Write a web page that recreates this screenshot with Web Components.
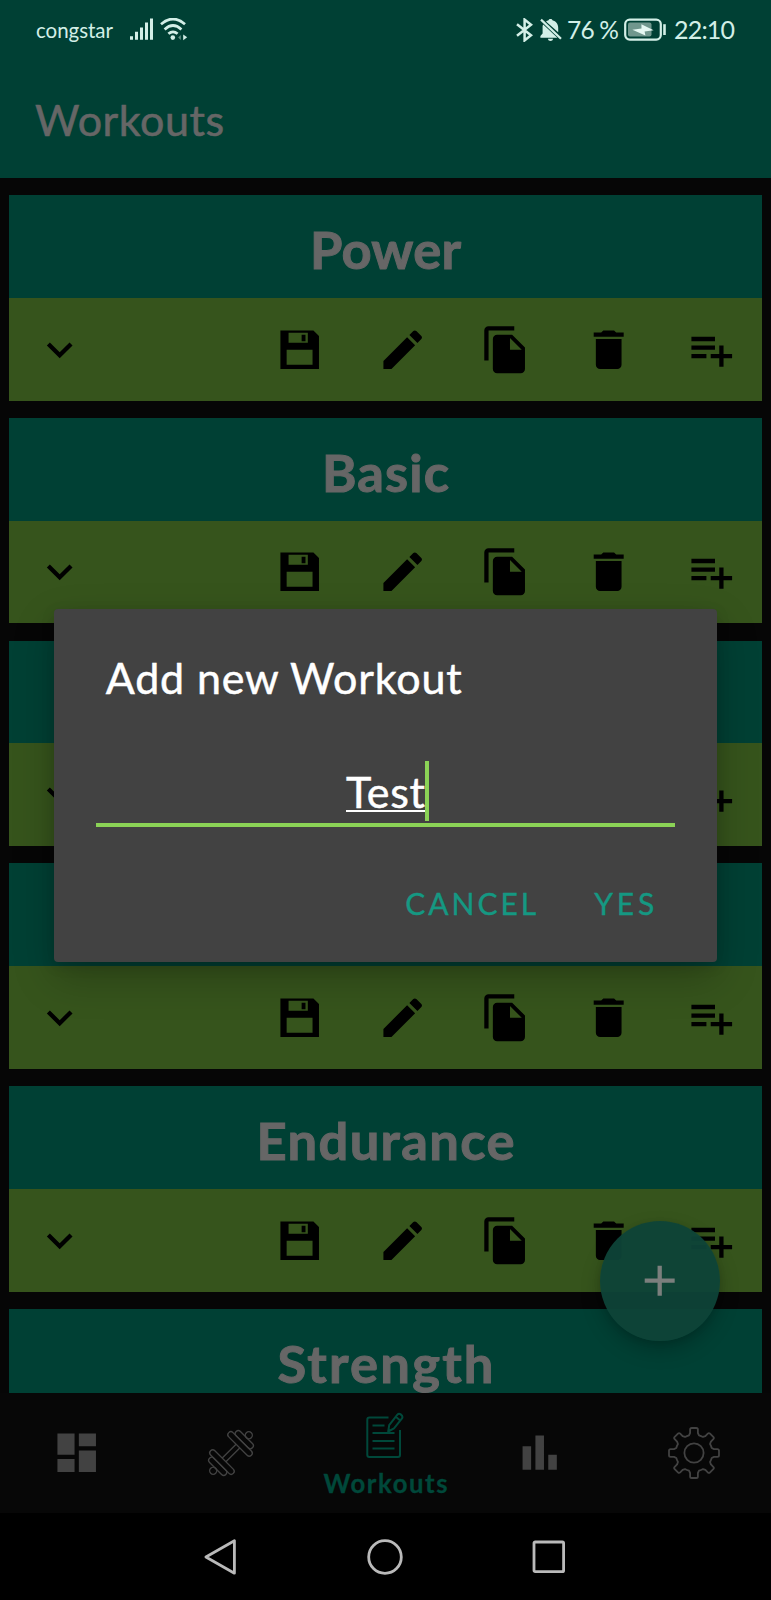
<!DOCTYPE html>
<html lang="en">
<head>
<meta charset="utf-8">
<title>Workouts</title>
<style>
  :root { --dp: 2.1417px; --teal: #004034; --lime: #36541c; --ink: #666; }
  html, body { margin: 0; background: #000; }
  body { font-family: "Lato", "Noto Sans", sans-serif; width: 771px; height: 1600px; overflow: hidden; }
</style>
</head>
<body>
<workout-app></workout-app>
<script>
const define = (name, html, setup) => {
  const t = document.createElement('template');
  t.innerHTML = html;
  customElements.define(name, class extends HTMLElement {
    constructor() {
      super();
      this.attachShadow({ mode: 'open' }).append(t.content.cloneNode(true));
    }
    connectedCallback() { if (setup) setup(this, this.shadowRoot); }
  });
};

/* Single-line label whose tracking is set so that it spans a given width. */
define('fit-text', `<style>
  :host { display: block; white-space: pre; flex: none; }
  span { display: inline-block; }
</style><span><slot></slot></span>`, (el, root) => {
  const w = parseFloat(el.getAttribute('width'));
  const span = root.querySelector('span');
  const n = el.textContent.length;
  const gap = (w - span.getBoundingClientRect().width) / (n - 1);
  span.style.letterSpacing = gap + 'px';
  span.style.marginRight = -gap + 'px';
});

const gearPath = () => {
  const p = [];
  for (let k = 0; k < 8; k++) {
    const a = k * Math.PI / 4, c = Math.cos(a), s = Math.sin(a);
    const r = (x, y) => (x * c - y * s).toFixed(2) + ' ' + (x * s + y * c).toFixed(2);
    p.push((k ? 'A18.4 18.4 0 0 1 ' : 'M') + r(-5, -17.7), 'L' + r(-3.9, -20), 'L' + r(-3.9, -23.4),
      'Q' + r(-3.9, -25) + ' ' + r(-2.3, -25), 'L' + r(2.3, -25), 'Q' + r(3.9, -25) + ' ' + r(3.9, -23.4),
      'L' + r(3.9, -20), 'L' + r(5, -17.7));
  }
  return p.join('') + 'A18.4 18.4 0 0 1 -5 -17.7Z';
};

const icons = {
  more: 'M16.59 8.59L12 13.17 7.41 8.59 6 10l6 6 6-6z',
  edit: 'M3 17.25V21h3.75L17.81 9.94l-3.75-3.75L3 17.25zM20.71 7.04c.39-.39.39-1.02 0-1.41l-2.34-2.34c-.39-.39-1.02-.39-1.41 0l-1.83 1.83 3.75 3.75 1.83-1.83z',
  save: 'M3 3H18.4L21 5.6V21H3ZM6.8 4.1V8.8H15.8V4.1ZM5.9 12V19H18V12ZM12.9 5H14.7V8.1H12.9Z',
  copy: 'M16 1H4c-1.1 0-2 .9-2 2v14h2V3h12V1zm-1 4l6 6v10c0 1.1-.9 2-2 2H7.99C6.89 23 6 22.1 6 21l.01-14c0-1.1.89-2 1.99-2h7zm-1 7h5.5L14 6.5V12z',
  trash: 'M6 19c0 1.1.9 2 2 2h8c1.1 0 2-.9 2-2V7H6v12zM19 4h-3.5l-1-1h-5l-1 1H5v2h14V4z',
  queue: 'M14 10H3v2h11v-2zm0-4H3v2h11V6zm4 8v-4h-2v4h-4v2h4v4h2v-4h4v-2h-4zM3 16h7v-2H3v2z',
  plus: 'M19 13h-6v6h-2v-6H5v-2h6V5h2v6h6v2z',
  board: 'M3 13h8V3H3v10zm0 8h8v-6H3v6zm10 0h8V11h-8v10zm0-18v6h8V3h-8z',
  bars: 'M4 9h4v11H4zM10 4h4v16h-4zM16 13h4v7h-4z'
};
define('app-icon', `<style>
  :host { display: block; flex: none; width: calc(var(--dp) * 24); height: calc(var(--dp) * 24); }
  svg { display: block; width: 100%; height: 100%; fill: currentColor; }
</style><svg viewBox="0 0 24 24"><path fill-rule="evenodd"/></svg>`, (el, root) =>
  root.querySelector('path').setAttribute('d', icons[el.getAttribute('name')]));

define('status-bar', `<style>
  :host { display: flex; align-items: center; height: 59px; padding: 0 36px 0 36px; box-sizing: border-box; color: #d3efe7; font-size: 20px; }
  svg { display: block; flex: none; }
  .sig { margin-left: 17px; }
  .wifi { margin-left: 6px; }
  .bt { margin-left: auto; }
  .bell { margin-left: 7px; }
  fit-text { line-height: 30px; }
  .num { font-size: 24.5px; }
</style>
<fit-text width="77" style="font-size:20.5px">congstar</fit-text>
<svg class="sig" width="24" height="24" viewBox="0 0 24 24" fill="currentColor"><path d="M0 18.2h3v3.6H0zM5 13.8h3v8H5zM10 9.4h3v12.4h-3zM15 4.6h3v17.2h-3zM20 .4h3v21.4h-3z"/></svg>
<svg class="wifi" width="28" height="24" viewBox="0 0 28 24" fill="none" stroke="currentColor" stroke-width="2.7"><path d="M1 6.2Q13 -4.2 25 6.2M4.6 11.4Q13 3.6 21.4 11.4M8.4 15.8Q13 11.8 17.6 15.8"/><circle cx="12.8" cy="19.6" r="2.3" fill="currentColor" stroke="none"/><path d="M23.2 16.4v5.8l4-2.9z" fill="currentColor" stroke="none"/><path d="M20.8 17v5l-2.6-2.5z" fill="currentColor" opacity=".45" stroke="none"/></svg>
<svg class="bt" width="17" height="24" viewBox="0 0 17 24" fill="none" stroke="currentColor" stroke-width="2.5"><path d="M1 6.2L15 17.2L8.6 22.4V1.6L15 6.8L1 17.8"/></svg>
<svg class="bell" width="22" height="24" viewBox="0 0 22 24" fill="currentColor"><path d="M3.2 6.6L17.4 19.8H.4V18L2.6 15.6V9.8C2.6 8.4 2.6 7.8 3.2 6.6ZM6 3.6C6.8 2.9 7.8 2.5 8.6 2.3C8.7 .5 12.3 .5 12.4 2.3C16 3 18.2 6.2 18.2 9.8V14.2ZM8 20.8h5c0 3-5 3-5 0z"/><path d="M1 1.6L21 20.8" stroke="currentColor" stroke-width="2.2"/></svg>
<fit-text class="num" width="52" style="margin-left:5px">76 %</fit-text>
<svg style="margin-left:5px" width="43" height="24" viewBox="0 0 43 24"><rect x="1.2" y="1.6" width="35.6" height="20" rx="4.5" fill="none" stroke="currentColor" stroke-width="2.2"/><rect x="4" y="4.6" width="23.5" height="14" rx="2" fill="#70978d"/><path d="M8.4 11.8L17.5 10.4L17.4 6.2L29.6 12.2L20.6 13.4L21.4 17.6Z" fill="#e5f8f2"/><path d="M39.2 6.2h2.6v10.8h-2.6z" fill="currentColor"/></svg>
<fit-text class="num" width="61" style="margin:-1px 0 0 7px;font-size:25px">22:10</fit-text>`);

define('app-header', `<style>
  :host { display: block; height: 178px; background: var(--teal); box-sizing: border-box; color: var(--ink); }
  .title { padding: 34px 0 0 35px; font-size: 43px; line-height: 54px; -webkit-text-stroke: .6px; }
</style><status-bar></status-bar><fit-text class="title" width="189">Workouts</fit-text>`);

define('workout-card', `<style>
  :host { display: block; height: calc(var(--dp) * 96); flex: none; margin-bottom: calc(var(--dp) * 8); }
  .head { display: flex; justify-content: center; align-items: center; height: 50%; background: var(--teal); color: var(--ink); font-weight: 700; font-size: 52.5px; line-height: 60px; padding-top: 5px; box-sizing: border-box; -webkit-text-stroke: 1px; }
  .bar { display: flex; height: 50%; background: var(--lime); color: #000; }
  .bar > div { width: calc(var(--dp) * 48); display: grid; place-items: center; }
  .bar > div:first-child { margin-right: auto; }
</style>
<div class="head"></div>
<div class="bar"><div><app-icon name="more"></app-icon></div><div><app-icon name="save"></app-icon></div><div><app-icon name="edit"></app-icon></div><div><app-icon name="copy"></app-icon></div><div><app-icon name="trash"></app-icon></div><div><app-icon name="queue"></app-icon></div></div>`,
(el, root) => {
  const title = el.getAttribute('name');
  if (!title) return;
  const t = document.createElement('fit-text');
  t.setAttribute('width', el.getAttribute('span'));
  t.textContent = title;
  root.querySelector('.head').append(t);
});

define('nav-bar', `<style>
  :host { display: grid; grid-template-columns: repeat(5, 1fr); height: 120px; background: #070707; color: #424242; }
  div { display: flex; flex-direction: column; align-items: center; justify-content: center; }
  .on { color: #00483a; justify-content: flex-start; padding-top: 18px; }
  .on fit-text { font-size: 25.7px; font-weight: 700; line-height: 32px; margin-top: 8px; -webkit-text-stroke: .3px; }
  svg { display: block; fill: none; stroke: currentColor; }
</style>
<div><app-icon name="board"></app-icon></div>
<div><svg width="48" height="48" viewBox="-24 -24 48 48" stroke-width="1.35"><g transform="rotate(-45)">
  <path d="M-9.8 -2.6H9.8M-9.8 2.6H9.8"/>
  <rect x="-15.8" y="-16" width="6" height="32" rx="3"/><rect x="-21.8" y="-11.5" width="6" height="23" rx="3"/><rect x="9.8" y="-16" width="6" height="32" rx="3"/><rect x="15.8" y="-11.5" width="6" height="23" rx="3"/><circle cx="-25.2" r="3.5"/><circle cx="25.2" r="3.5"/></g></svg></div>
<div class="on"><svg width="38" height="48" viewBox="0 0 38 48" stroke-width="2" stroke-linejoin="round"><path d="M22.5 6.5H3.5Q1.3 6.5 1.3 8.7V44Q1.3 46 3.3 46H32Q34 46 34 44V19M6.5 14.5H18.5M6.5 22H28.5M6.5 30H28.5M6.5 37.5H28.5"/><path d="M22.2 20.5L23.2 14.2L31.4 3.6Q33 2 35 3.6Q37.2 5.4 36 7.4L28 17.4ZM29.8 5.8L34.2 9.4"/></svg><fit-text width="124">Workouts</fit-text></div>
<div><app-icon name="bars"></app-icon></div>
<div><svg width="54" height="54" viewBox="-27 -27 54 54" stroke-width="1.8" stroke-linejoin="round"><path class="gear"/><circle r="9.6"/></svg></div>`,
(el, root) => root.querySelector('.gear').setAttribute('d', gearPath()));

define('system-nav', `<style>
  :host { display: flex; align-items: center; justify-content: center; gap: 127px; height: 87px; background: #000; box-sizing: border-box; padding: 0 1px 0 0; }
  svg { display: block; fill: none; stroke: #bababa; stroke-width: 2.8; stroke-linejoin: round; }
</style>
<svg width="38" height="38" viewBox="0 0 38 38"><path d="M33.4 2.8V35.2L4.9 19Z"/></svg>
<svg width="38" height="38" viewBox="0 0 38 38"><circle cx="19" cy="19" r="16.3"/></svg>
<svg width="38" height="38" viewBox="0 0 38 38"><rect x="3" y="4" width="29.6" height="29.6" rx="1.2"/></svg>`);

define('float-button', `<style>
  :host { display: grid; place-items: center; width: 120px; height: 120px; border-radius: 50%; background: rgba(14,67,56,.95); color: #7b7f7d; box-shadow: 0 9px 20px rgba(0,0,0,.22), 0 2px 6px rgba(0,0,0,.1); }
</style><app-icon name="plus"></app-icon>`);

define('prompt-dialog', `<style>
  :host { display: flex; flex-direction: column; box-sizing: border-box; width: 663.5px; height: 353px; padding: 42px 42px 0; background: #424242; border-radius: 4px; color: #fff; box-shadow: 0 16px 42px rgba(0,0,0,.24), 0 4px 14px rgba(0,0,0,.12); font-size: 43px; line-height: 54px; }
  .title { padding-left: 10px; -webkit-text-stroke: .5px; }
  .field { display: flex; justify-content: center; align-items: flex-end; margin-top: 55px; height: 67px; border-bottom: 4px solid #8bd356; padding-left: 4px; box-sizing: border-box; }
  .value { position: relative; height: 58px; -webkit-text-stroke: .5px; }
  .value::after { content: ""; position: absolute; left: 0; right: 0; bottom: 11px; height: 2px; background: #fff; }
  .caret { width: 4px; height: 60px; margin-bottom: 2px; background: #8bd356; }
  .actions { display: flex; justify-content: flex-end; gap: 58px; padding-right: 21px; margin-top: 53px; color: #159882; font-size: 30px; line-height: 46px; -webkit-text-stroke: .4px; }
</style>
<fit-text class="title" width="356">Add new Workout</fit-text>
<div class="field"><fit-text class="value" width="79">Test</fit-text><div class="caret"></div></div>
<div class="actions"><fit-text width="131">CANCEL</fit-text><fit-text width="60">YES</fit-text></div>`);

define('workout-app', `<style>
  :host { display: flex; flex-direction: column; position: relative; width: 771px; height: 1600px; background: #060606; }
  .list { height: 1215px; box-sizing: border-box; padding: calc(var(--dp) * 8) calc(var(--dp) * 4) 0; display: flex; flex-direction: column; overflow: hidden; flex: none; }
  float-button { position: absolute; left: 600px; top: 1221px; }
  prompt-dialog { position: absolute; left: 53.7px; top: 609px; }
</style>
<app-header></app-header>
<div class="list">
  <workout-card name="Power" span="151"></workout-card>
  <workout-card name="Basic" span="127"></workout-card>
  <workout-card></workout-card>
  <workout-card></workout-card>
  <workout-card name="Endurance" span="258"></workout-card>
  <workout-card name="Strength" span="216"></workout-card>
</div>
<nav-bar></nav-bar>
<system-nav></system-nav>
<float-button></float-button>
<prompt-dialog></prompt-dialog>`);
</script>
</body>
</html>
